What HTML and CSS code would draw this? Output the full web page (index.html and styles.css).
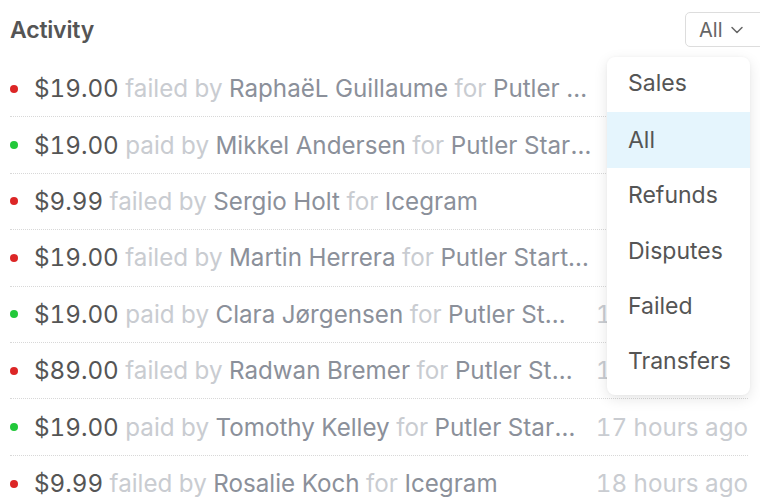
FILE: index.html
```html
<!DOCTYPE html>
<html>
<head>
<meta charset="utf-8">
<link rel="stylesheet" href="styles.css">
</head>
<body>
<div class="panel">
  <div class="header">
    <h1 class="title">Activity</h1>
    <button class="filter">All <svg class="chev" width="14" height="14" viewBox="0 0 14 14"><path d="M2 4.5 L7 9.5 L12 4.5" fill="none" stroke="#666" stroke-width="1.5" stroke-linecap="round" stroke-linejoin="round"/></svg></button>
  </div>
  <ul class="list">
    <li class="row"><span class="dot red"></span><span class="text"><span class="amt">$19.00</span> <span class="mute">failed by</span> <span class="who">RaphaëL Guillaume</span> <span class="mute">for</span> <span class="who">Putler Starter Plan</span></span><span class="time">9 hours ago</span></li>
    <li class="row"><span class="dot green"></span><span class="text"><span class="amt">$19.00</span> <span class="mute">paid by</span> <span class="who">Mikkel Andersen</span> <span class="mute">for</span> <span class="who">Putler Starter Plan</span></span><span class="time">9 hours ago</span></li>
    <li class="row"><span class="dot red"></span><span class="text"><span class="amt">$9.99</span> <span class="mute">failed by</span> <span class="who">Sergio Holt</span> <span class="mute">for</span> <span class="who">Icegram</span></span><span class="time">9 hours ago</span></li>
    <li class="row"><span class="dot red"></span><span class="text"><span class="amt">$19.00</span> <span class="mute">failed by</span> <span class="who">Martin Herrera</span> <span class="mute">for</span> <span class="who">Putler Starter Plan</span></span><span class="time">9 hours ago</span></li>
    <li class="row"><span class="dot green"></span><span class="text"><span class="amt">$19.00</span> <span class="mute">paid by</span> <span class="who">Clara Jørgensen</span> <span class="mute">for</span> <span class="who">Putler Starter Plan</span></span><span class="time">16 hours ago</span></li>
    <li class="row"><span class="dot red"></span><span class="text"><span class="amt">$89.00</span> <span class="mute">failed by</span> <span class="who">Radwan Bremer</span> <span class="mute">for</span> <span class="who">Putler Starter Plan</span></span><span class="time">16 hours ago</span></li>
    <li class="row"><span class="dot green"></span><span class="text"><span class="amt">$19.00</span> <span class="mute">paid by</span> <span class="who">Tomothy Kelley</span> <span class="mute">for</span> <span class="who">Putler Starter Plan</span></span><span class="time">17 hours ago</span></li>
    <li class="row"><span class="dot red"></span><span class="text"><span class="amt">$9.99</span> <span class="mute">failed by</span> <span class="who">Rosalie Koch</span> <span class="mute">for</span> <span class="who">Icegram</span></span><span class="time">18 hours ago</span></li>
  </ul>
  <div class="menu">
    <div class="item">Sales</div>
    <div class="item active">All</div>
    <div class="item">Refunds</div>
    <div class="item">Disputes</div>
    <div class="item">Failed</div>
    <div class="item">Transfers</div>
  </div>
</div>
</body>
</html>
```

FILE: styles.css
```css
html, body {
  margin: 0;
  padding: 0;
  background: #fff;
  overflow: hidden;
}
body {
  font-family: Inter, "Liberation Sans", sans-serif;
  width: 760px;
  height: 500px;
}
.panel {
  position: relative;
  padding: 0 12px 0 10px;
}
.header {
  height: 61px;
  display: flex;
  align-items: center;
  justify-content: space-between;
}
.title {
  margin: 0;
  margin-top: -2px;
  font-size: 23px;
  font-weight: 600;
  color: #555;
  letter-spacing: -0.2px;
}
.filter {
  margin-top: -2px;
  margin-right: -22px;
  width: 85px;
  height: 35px;
  box-sizing: border-box;
  border: 1px solid #ddd;
  border-radius: 5px;
  background: #fff;
  font-family: inherit;
  font-size: 20px;
  color: #666;
  display: flex;
  align-items: center;
  gap: 7px;
  padding: 0 0 0 13px;
}
.chev { margin-top: 1px; }
.list {
  list-style: none;
  margin: 0;
  padding: 0;
}
.row {
  height: 56.4px;
  box-sizing: border-box;
  border-bottom: 1px dotted #d8d8d8;
  display: flex;
  align-items: center;
  font-size: 24.2px;
  font-variant-numeric: tabular-nums;
}
.row:last-child { border-bottom: none; }
.dot {
  flex: none;
  width: 8px;
  height: 8px;
  border-radius: 50%;
  margin: 0 16px 0 0;
}
.red { background: #dc2626; }
.green { background: #22c83a; }
.text {
  flex: 1;
  min-width: 0;
  white-space: nowrap;
  overflow: hidden;
  text-overflow: ellipsis;
  color: #8b909a;
}
.amt { color: #555; }
.mute { color: #c9ccd1; }
.who { color: #8b909a; }
.time {
  flex: none;
  margin-left: 18px;
  color: #c9ccd1;
  white-space: nowrap;
}
.menu {
  position: absolute;
  left: 607px;
  top: 57px;
  width: 143px;
  padding-bottom: 6px;
  background: #fff;
  border-radius: 8px;
  box-shadow: 0 4px 14px rgba(0, 0, 0, 0.10), 0 0 3px rgba(0, 0, 0, 0.04);
}
.item {
  height: 55.3px;
  display: flex;
  align-items: center;
  padding-left: 21px;
  font-size: 23px;
  color: #555;
}
.item:first-child { padding-bottom: 4px; box-sizing: border-box; }
.item.active { background: #e5f5fd; }
```
